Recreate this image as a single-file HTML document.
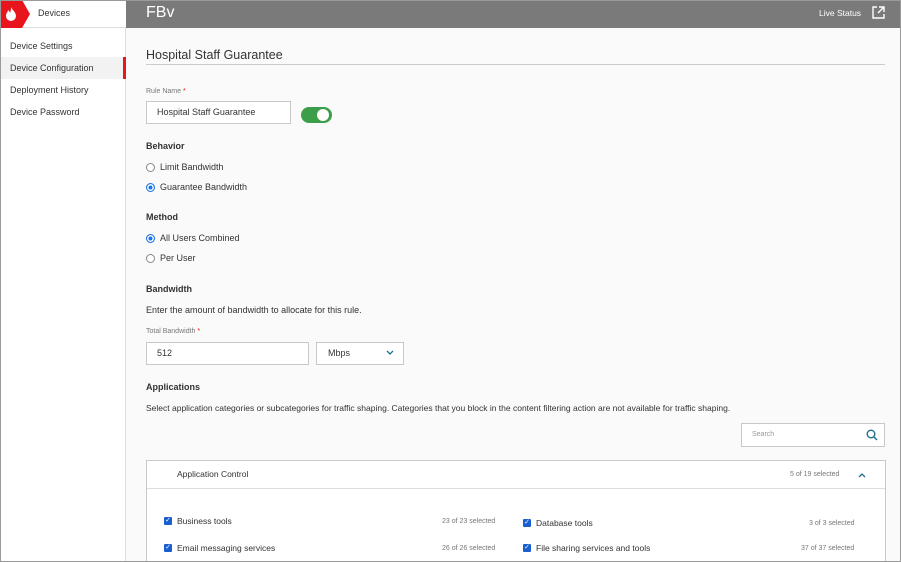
<!DOCTYPE html>
<html style="width:901px;height:562px;overflow:hidden"><head><style>
*{box-sizing:border-box;margin:0;padding:0}
body{width:901px;height:562px;overflow:hidden;font-family:"Liberation Sans",sans-serif;color:#333;background:#fafafa;position:relative}
.abs{position:absolute}
.side{left:0;top:0;width:126px;height:562px;background:#fff;border-right:1px solid #ddd}
.top{left:126px;top:0;width:775px;height:28px;background:#7a7a7a}
.t{position:absolute;font-size:9px;white-space:nowrap}
.in{position:absolute;background:#fff;border:1px solid #c8c8c8}
.radio{position:absolute;width:9px;height:9px;border-radius:50%;border:1px solid #888;background:#fff}
.radio.on{border-color:#1a73e8;box-shadow:inset 0 0 0 1.5px #fff;background:#1a73e8}
.cb{position:absolute;width:8px;height:8px;background:#1a5fd0;border-radius:1px;color:#fff;font-size:7px;line-height:8px;text-align:center}
b{font-weight:bold}
.g{color:#777;font-size:7px}
</style></head><body>
<div class="abs side"></div>
<div class="abs" style="left:0;top:0;width:126px;height:28px;background:#fff;border-bottom:1px solid #ddd"></div>
<div class="abs" style="left:0;top:0;width:22px;height:28px;background:#e8161c"></div>
<div class="abs" style="left:22px;top:0;width:0;height:0;border-top:14px solid transparent;border-bottom:14px solid transparent;border-left:8px solid #e8161c"></div>
<svg class="abs" style="left:5px;top:7px" width="12" height="14" viewBox="0 0 12 14"><path d="M6 0C7 3 11 5 11 9a5 5 0 0 1-10 0C1 6 3 5 3 3c1 1 2 2 2 3 1-2 1-4 1-6z" fill="#fff"/></svg>
<div class="t" style="left:38px;top:8px">Devices</div>
<div class="abs" style="left:0;top:57px;width:123px;height:22px;background:#f2f2f2"></div>
<div class="abs" style="left:123px;top:57px;width:3px;height:22px;background:#e8161c"></div>
<div class="t" style="left:10px;top:41px">Device Settings</div>
<div class="t" style="left:10px;top:63px">Device Configuration</div>
<div class="t" style="left:10px;top:85px">Deployment History</div>
<div class="t" style="left:10px;top:107px">Device Password</div>
<div class="abs top"></div>
<div class="t" style="left:146px;top:4px;font-size:16px;color:#fff">FBv</div>
<div class="t" style="left:819px;top:8px;color:#fff;font-size:8.5px">Live Status</div>
<svg class="abs" style="left:872px;top:6px" width="13" height="13" viewBox="0 0 13 13" fill="none" stroke="#fff" stroke-width="1.4"><path d="M5 1H1v11h11V8M7 1h5v5M12 1L6 7"/></svg>
<div class="t" style="left:146px;top:48px;font-size:12.5px;color:#333">Hospital Staff Guarantee</div>
<div class="abs" style="left:146px;top:64px;width:739px;height:1px;background:#ccc"></div>
<div class="t g" style="left:146px;top:88px">Rule Name <span style="color:#e8161c">*</span></div>
<div class="in" style="left:146px;top:101px;width:145px;height:23px"></div>
<div class="t" style="left:157px;top:107px">Hospital Staff Guarantee</div>
<div class="abs" style="left:301px;top:107px;width:31px;height:16px;border-radius:8px;background:#3c9e48"></div>
<div class="abs" style="left:317px;top:109px;width:12px;height:12px;border-radius:50%;background:#fff"></div>
<div class="t" style="left:146px;top:141px"><b>Behavior</b></div>
<div class="radio" style="left:146px;top:163px"></div><div class="t" style="left:160px;top:162px">Limit Bandwidth</div>
<div class="radio on" style="left:146px;top:183px"></div><div class="t" style="left:160px;top:182px">Guarantee Bandwidth</div>
<div class="t" style="left:146px;top:212px"><b>Method</b></div>
<div class="radio on" style="left:146px;top:234px"></div><div class="t" style="left:160px;top:233px">All Users Combined</div>
<div class="radio" style="left:146px;top:254px"></div><div class="t" style="left:160px;top:253px">Per User</div>
<div class="t" style="left:146px;top:284px"><b>Bandwidth</b></div>
<div class="t" style="left:146px;top:305px">Enter the amount of bandwidth to allocate for this rule.</div>
<div class="t g" style="left:146px;top:328px">Total Bandwidth <span style="color:#e8161c">*</span></div>
<div class="in" style="left:146px;top:342px;width:163px;height:23px"></div>
<div class="t" style="left:157px;top:348px">512</div>
<div class="in" style="left:316px;top:342px;width:88px;height:23px"></div>
<div class="t" style="left:328px;top:348px">Mbps</div>
<svg class="abs" style="left:386px;top:350px" width="8" height="6" viewBox="0 0 8 6" fill="none" stroke="#1f6f8b" stroke-width="1.3"><path d="M1 1l3 3 3-3"/></svg>
<div class="t" style="left:146px;top:382px"><b>Applications</b></div>
<div class="t" style="left:146px;top:403px;font-size:8.5px">Select application categories or subcategories for traffic shaping. Categories that you block in the content filtering action are not available for traffic shaping.</div>
<div class="in" style="left:741px;top:423px;width:144px;height:24px"></div>
<div class="t g" style="left:752px;top:431px;color:#999">Search</div>
<svg class="abs" style="left:866px;top:429px" width="12" height="12" viewBox="0 0 12 12" fill="none" stroke="#1f6f8b" stroke-width="1.4"><circle cx="5" cy="5" r="3.8"/><path d="M8 8l3 3"/></svg>
<div class="in" style="left:146px;top:460px;width:740px;height:110px"></div>
<div class="abs" style="left:147px;top:488px;width:738px;height:1px;background:#ddd"></div>
<div class="t" style="left:177px;top:469px;font-size:8.5px">Application Control</div>
<div class="t g" style="left:790px;top:471px">5 of 19 selected</div>
<svg class="abs" style="left:858px;top:472px" width="8" height="6" viewBox="0 0 8 6" fill="none" stroke="#1f6f8b" stroke-width="1.3"><path d="M1 5l3-3 3 3"/></svg>
<div class="cb" style="left:164px;top:517px">✓</div><div class="t" style="left:177px;top:516px;font-size:8.5px">Business tools</div><div class="t g" style="left:442px;top:518px">23 of 23 selected</div>
<div class="cb" style="left:523px;top:519px">✓</div><div class="t" style="left:536px;top:518px;font-size:8.5px">Database tools</div><div class="t g" style="left:809px;top:520px">3 of 3 selected</div>
<div class="cb" style="left:164px;top:544px">✓</div><div class="t" style="left:177px;top:543px;font-size:8.5px">Email messaging services</div><div class="t g" style="left:442px;top:545px">26 of 26 selected</div>
<div class="cb" style="left:523px;top:544px">✓</div><div class="t" style="left:536px;top:543px;font-size:8.5px">File sharing services and tools</div><div class="t g" style="left:801px;top:545px">37 of 37 selected</div>
<div class="abs" style="left:0;top:0;width:901px;height:562px;border:1px solid #9a9a9a"></div>
</body></html>
